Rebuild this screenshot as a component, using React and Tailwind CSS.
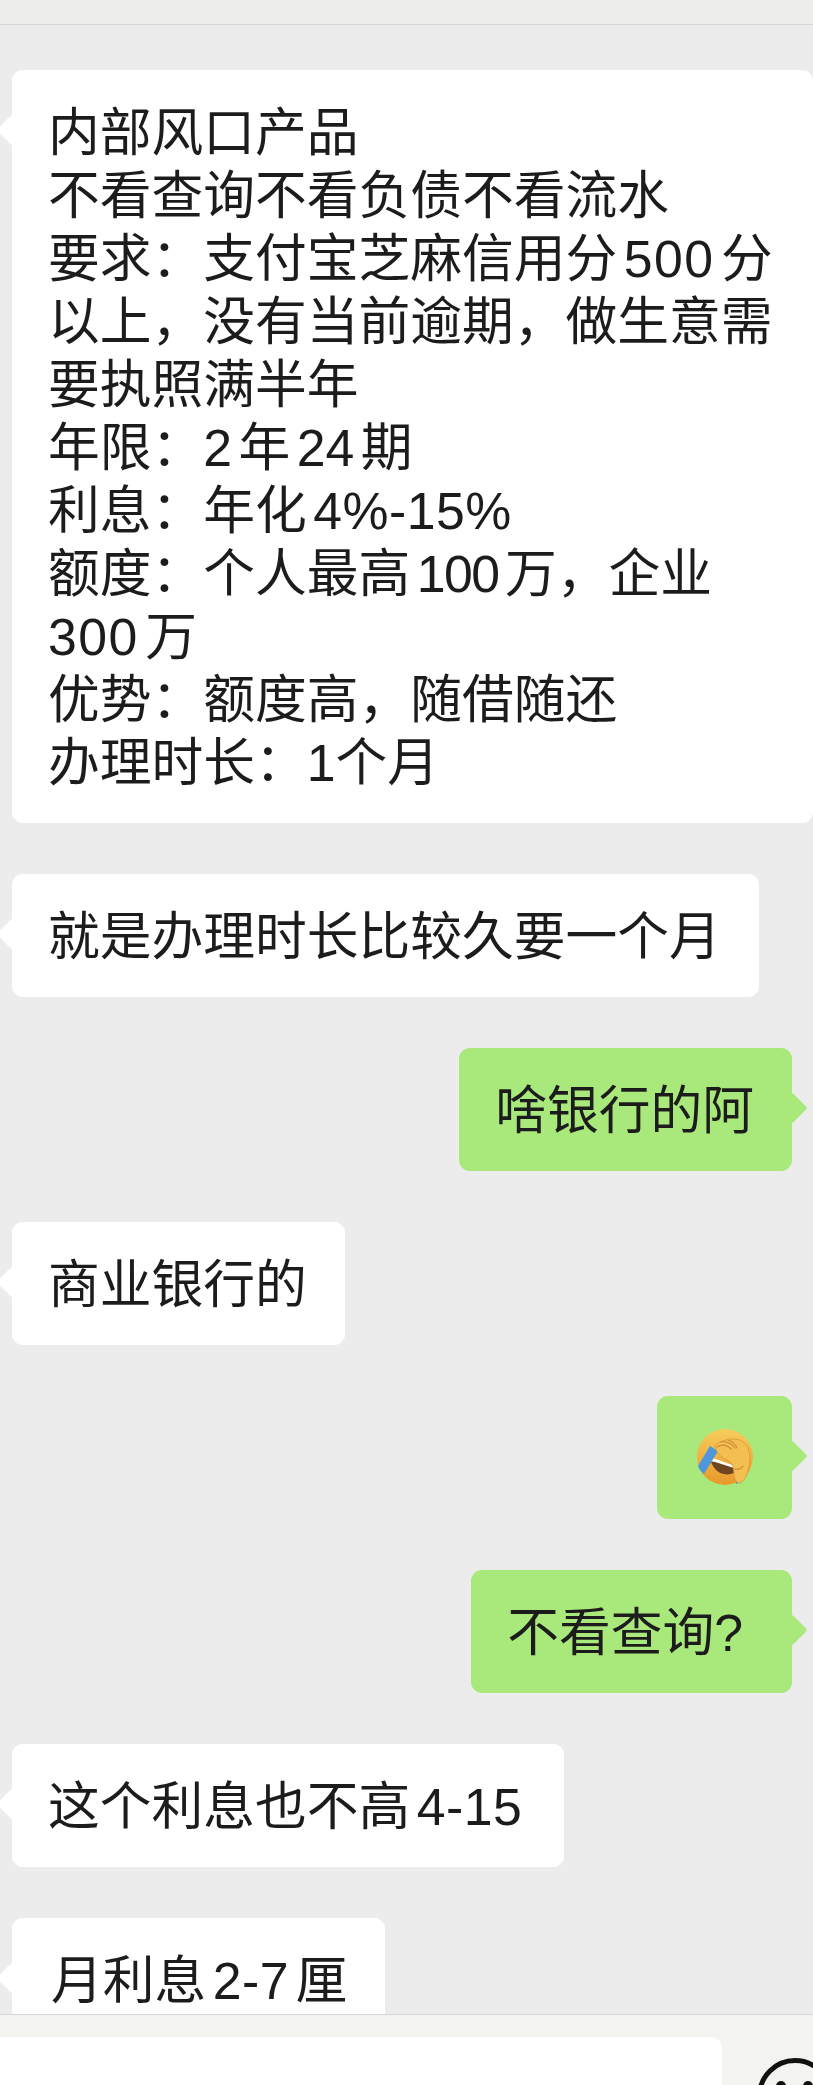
const font = "[font-family:'Liberation_Sans','Noto_Sans_CJK_SC',sans-serif]";

function Tail({ side, color }) {
  const pos = side === 'left' ? '-left-[11px]' : '-right-[11px]';
  return <span className={`absolute top-[49px] h-[22px] w-[22px] rotate-45 rounded-[2px] ${pos} ${color}`} />;
}

function FacepalmEmoji() {
  return (
    <svg viewBox="0 0 56 56" className="block h-14 w-14">
      <defs>
        <linearGradient id="face" x1="0" y1="0" x2="0" y2="1">
          <stop offset="0" stopColor="#f6cd5c" />
          <stop offset="1" stopColor="#e8982a" />
        </linearGradient>
      </defs>
      <circle cx="28" cy="28" r="28" fill="url(#face)" />
      <path d="M14 33c7-1 16 1 24 7l-1 4c-3 1-6 2-10 1-6-1-10-5-13-12z" fill="#6f4420" />
      <path d="M16 29l22 8-1 2-22-7z" fill="#fff" />
      <path d="M1 37L13 17l8 5L7 45c-3-2-5-5-6-8zM38 42l4 0 3 10-6 3z" fill="#4f97dd" />
      <path d="M18 17c3-4 11-7 18-7 7 0 12 3 15 9 3 8 2 18-1 26-1 4-4 8-8 9-3 0-4-4-5-8 0-7-1-12-7-15-4-2-10-5-12-14z" fill="#f3bf50" stroke="#d9963a" strokeWidth="0.8" />
      <g fill="none" stroke="#cc8a32" strokeWidth="1.1" strokeLinecap="round">
        <path d="M20 18c5-3 10-2 14 2" />
        <path d="M24 13c5-1 10 1 14 6" />
        <path d="M31 11c4 1 7 4 9 8" />
        <path d="M38 40c3 1 6 0 8-3" />
      </g>
    </svg>
  );
}

function Bubble({ side = 'left', className = '', children }) {
  const color = side === 'left' ? 'bg-white' : 'bg-[#a9e97b]';
  return (
    <div className={`relative shrink-0 rounded-[11px] pl-9 pr-[38px] pt-[32px] pb-[28px] ${color} ${className}`}>
      <Tail side={side} color={color} />
      <div className="relative whitespace-pre">{children}</div>
    </div>
  );
}

export default function App() {
  return (
    <div className={`flex h-[2085px] w-[813px] flex-col overflow-hidden bg-[#ececec] text-[51.75px] leading-[63px] text-[#1c1c1c] [text-autospace:normal] ${font}`}>
      <div className="h-[25px] shrink-0 border-b border-[#d6d6d6] bg-[#ededeb]" />
      <main className="flex min-h-0 flex-1 flex-col gap-[51px] overflow-hidden pt-[45px]">
        <Bubble className="ml-3 w-[801px]">
          <div>内部风口产品</div>
          <div>不看查询不看负债不看流水</div>
          <div>要求：支付宝芝麻信用分<span className="tracking-[1.5px]">500</span>分</div>
          <div>以上，没有当前逾期，做生意需</div>
          <div>要执照满半年</div>
          <div>年限：2年24期</div>
          <div>利息：年化<span className="tracking-[0.5px]">4%-15%</span></div>
          <div>额度：个人最高<span className="tracking-[-1.5px]">100</span>万，企业</div>
          <div><span className="tracking-[1.5px]">300</span>万</div>
          <div>优势：额度高，随借随还</div>
          <div className="[text-autospace:no-autospace]">办理时长：1个月</div>
        </Bubble>
        <Bubble className="ml-3 self-start">就是办理时长比较久要一个月</Bubble>
        <Bubble side="right" className="mr-[21px] self-end">啥银行的阿</Bubble>
        <Bubble className="ml-3 self-start">商业银行的</Bubble>
        <Bubble side="right" className="mr-[21px] self-end !px-[39.5px] !pt-[33px] !pb-[34px]"><FacepalmEmoji /></Bubble>
        <Bubble side="right" className="mr-[21px] self-end !pr-[49px]">不看查询?</Bubble>
        <Bubble className="ml-3 self-start !pr-[42px]">这个利息也不高<span className="tracking-[0.5px]">4-15</span></Bubble>
        <Bubble className="ml-3 self-start !pl-[39px] !pr-[38px]">月利息<span className="tracking-[0.5px]">2-7</span>厘</Bubble>
      </main>
      <footer className="flex h-[71px] shrink-0 items-start gap-[35px] border-t border-[#d6d6d6] bg-[#f3f4f0] pt-[22px]">
        <div className="h-[80px] w-[722px] shrink-0 rounded-tr-[11px] bg-white" />
        <svg viewBox="0 0 76 76" className="mt-[21px] h-[76px] w-[76px] shrink-0" fill="none" stroke="#111" strokeWidth="5">
          <circle cx="38" cy="38" r="35.5" />
          <circle cx="24" cy="28" r="5" fill="#111" stroke="none" />
          <circle cx="51" cy="28" r="5" fill="#111" stroke="none" />
        </svg>
      </footer>
    </div>
  );
}
